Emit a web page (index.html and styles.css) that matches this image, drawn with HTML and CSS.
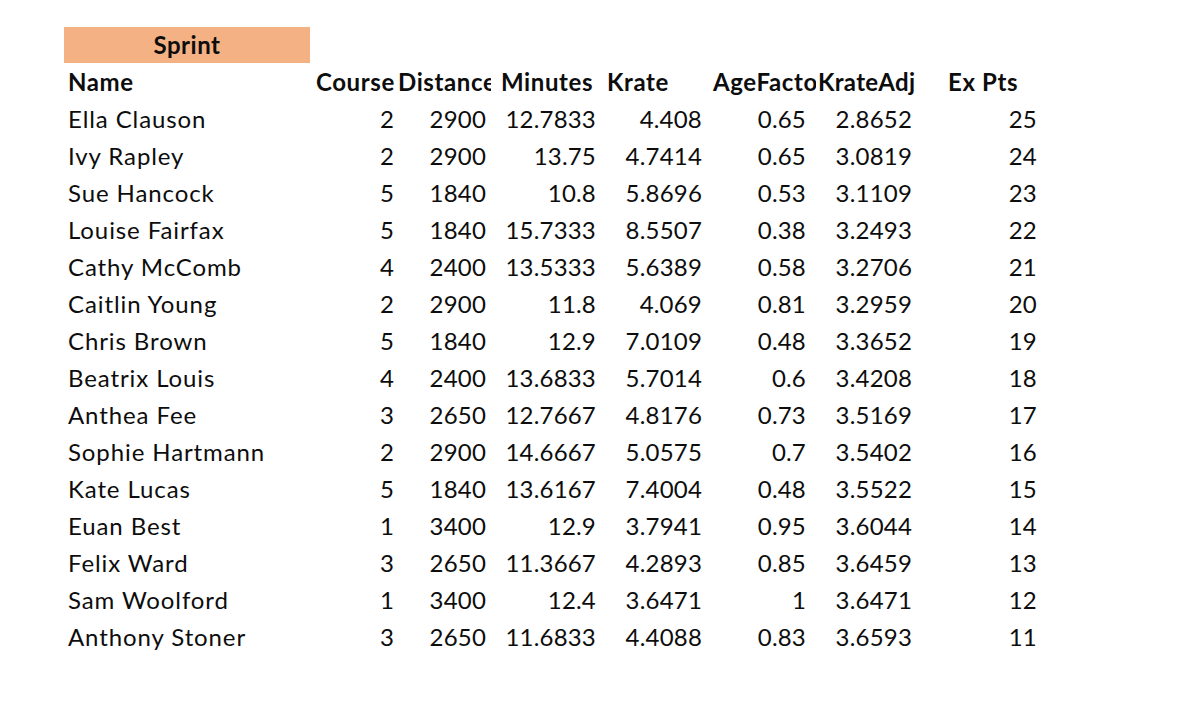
FILE: index.html
```html
<!DOCTYPE html>
<html>
<head>
<meta charset="utf-8">
<link rel="stylesheet" href="styles.css">
</head>
<body>
<div class="sheet">
  <div class="title">Sprint</div>
  <div class="grid">
    <div class="h c1">Name</div><div class="h c2">Course</div><div class="h c3">Distance</div><div class="h c4">Minutes</div><div class="h c5">Krate</div><div class="h c6">AgeFactor</div><div class="h c7">KrateAdj</div><div class="h c8">Ex Pts</div>

    <div class="t c1">Ella Clauson</div><div class="n c2">2</div><div class="n c3">2900</div><div class="n c4">12.7833</div><div class="n c5">4.408</div><div class="n c6">0.65</div><div class="n c7">2.8652</div><div class="n c8">25</div>
    <div class="t c1">Ivy Rapley</div><div class="n c2">2</div><div class="n c3">2900</div><div class="n c4">13.75</div><div class="n c5">4.7414</div><div class="n c6">0.65</div><div class="n c7">3.0819</div><div class="n c8">24</div>
    <div class="t c1">Sue Hancock</div><div class="n c2">5</div><div class="n c3">1840</div><div class="n c4">10.8</div><div class="n c5">5.8696</div><div class="n c6">0.53</div><div class="n c7">3.1109</div><div class="n c8">23</div>
    <div class="t c1">Louise Fairfax</div><div class="n c2">5</div><div class="n c3">1840</div><div class="n c4">15.7333</div><div class="n c5">8.5507</div><div class="n c6">0.38</div><div class="n c7">3.2493</div><div class="n c8">22</div>
    <div class="t c1">Cathy McComb</div><div class="n c2">4</div><div class="n c3">2400</div><div class="n c4">13.5333</div><div class="n c5">5.6389</div><div class="n c6">0.58</div><div class="n c7">3.2706</div><div class="n c8">21</div>
    <div class="t c1">Caitlin Young</div><div class="n c2">2</div><div class="n c3">2900</div><div class="n c4">11.8</div><div class="n c5">4.069</div><div class="n c6">0.81</div><div class="n c7">3.2959</div><div class="n c8">20</div>
    <div class="t c1">Chris Brown</div><div class="n c2">5</div><div class="n c3">1840</div><div class="n c4">12.9</div><div class="n c5">7.0109</div><div class="n c6">0.48</div><div class="n c7">3.3652</div><div class="n c8">19</div>
    <div class="t c1">Beatrix Louis</div><div class="n c2">4</div><div class="n c3">2400</div><div class="n c4">13.6833</div><div class="n c5">5.7014</div><div class="n c6">0.6</div><div class="n c7">3.4208</div><div class="n c8">18</div>
    <div class="t c1">Anthea Fee</div><div class="n c2">3</div><div class="n c3">2650</div><div class="n c4">12.7667</div><div class="n c5">4.8176</div><div class="n c6">0.73</div><div class="n c7">3.5169</div><div class="n c8">17</div>
    <div class="t c1">Sophie Hartmann</div><div class="n c2">2</div><div class="n c3">2900</div><div class="n c4">14.6667</div><div class="n c5">5.0575</div><div class="n c6">0.7</div><div class="n c7">3.5402</div><div class="n c8">16</div>
    <div class="t c1">Kate Lucas</div><div class="n c2">5</div><div class="n c3">1840</div><div class="n c4">13.6167</div><div class="n c5">7.4004</div><div class="n c6">0.48</div><div class="n c7">3.5522</div><div class="n c8">15</div>
    <div class="t c1">Euan Best</div><div class="n c2">1</div><div class="n c3">3400</div><div class="n c4">12.9</div><div class="n c5">3.7941</div><div class="n c6">0.95</div><div class="n c7">3.6044</div><div class="n c8">14</div>
    <div class="t c1">Felix Ward</div><div class="n c2">3</div><div class="n c3">2650</div><div class="n c4">11.3667</div><div class="n c5">4.2893</div><div class="n c6">0.85</div><div class="n c7">3.6459</div><div class="n c8">13</div>
    <div class="t c1">Sam Woolford</div><div class="n c2">1</div><div class="n c3">3400</div><div class="n c4">12.4</div><div class="n c5">3.6471</div><div class="n c6">1</div><div class="n c7">3.6471</div><div class="n c8">12</div>
    <div class="t c1">Anthony Stoner</div><div class="n c2">3</div><div class="n c3">2650</div><div class="n c4">11.6833</div><div class="n c5">4.4088</div><div class="n c6">0.83</div><div class="n c7">3.6593</div><div class="n c8">11</div>
  </div>
</div>
</body>
</html>
```

FILE: styles.css
```css
html, body {
  margin: 0;
  padding: 0;
  background: #ffffff;
}

.sheet {
  padding: 27px 0 0 64px;
  font-family: Lato, "Liberation Sans", sans-serif;
  font-size: 24px;
  color: #0d0d0d;
}

.title {
  width: 246px;
  height: 36px;
  line-height: 36px;
  background: #f4b183;
  text-align: center;
  font-weight: 700;
  letter-spacing: 0.5px;
}

.grid {
  display: grid;
  grid-template-columns: 248px 86px 93px 109px 106px 110px 100px 125px;
  grid-auto-rows: 37px;
}

.grid > div {
  line-height: 37px;
  white-space: nowrap;
  overflow: hidden;
}

.h {
  font-weight: 700;
  text-align: left;
  letter-spacing: 0.6px;
}

.t {
  padding-left: 4px;
  letter-spacing: 0.9px;
}

.n {
  text-align: right;
  padding-right: 4px;
  letter-spacing: 0.2px;
}

.h.c1 { padding-left: 4px; }
.h.c2 { padding-left: 4px; }
.h.c3 { padding-left: 0; }
.h.c4 { padding-left: 10px; }
.h.c5 { padding-left: 7px; }
.h.c6 { padding-left: 7px; }
.h.c7 { padding-left: 2px; letter-spacing: 0.3px; }
.h.c8 { padding-left: 32px; }

.n.c3 { padding-right: 5px; }
.n.c6 { padding-right: 10px; }
```
